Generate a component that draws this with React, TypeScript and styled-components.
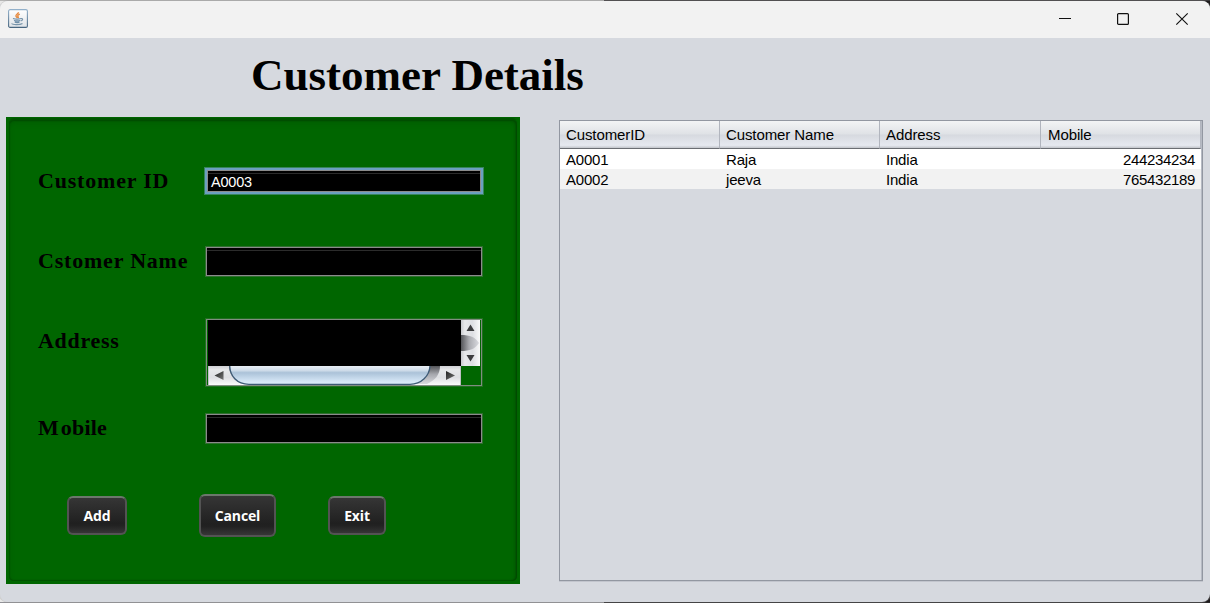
import React from "react";
import styled, { createGlobalStyle } from "styled-components";

const GlobalStyle = createGlobalStyle`
  * { box-sizing: border-box; }
  body { margin: 0; background: #1d1a1c; }
`;

const Backdrop = styled.div`
  width: 1210px;
  height: 603px;
  padding: 1px 0;
  overflow: hidden;
  background:
    linear-gradient(90deg, #b5b5b5 0 604px, #3c3a3c 604px) top / 100% 1px no-repeat,
    linear-gradient(90deg, #929297 0 604px, #2b292b 604px) bottom / 100% 1px no-repeat,
    linear-gradient(90deg, #e8e8e8 0 604px, #1d1a1c 604px);
`;

const Frame = styled.div`
  display: flex;
  flex-direction: column;
  height: 601px;
  border-radius: 8px;
  overflow: hidden;
  background: #d6d9df;
  box-shadow: 0 0 0 1px #8f8f8f44;
`;

const TitleBar = styled.header`
  display: flex;
  align-items: flex-start;
  height: 37px;
  flex: none;
  padding: 8px 20px 0 8px;
  background: #f2f2f2;
  svg { display: block; }
`;

const WindowControls = styled.div`
  display: flex;
  gap: 44px;
  margin: 3px 0 0 auto;
`;

const Heading = styled.h1`
  margin: 0;
  height: 79px;
  flex: none;
  padding-left: 251px;
  font: bold 45px/74px "Liberation Serif", serif;
  color: #000;
`;

const Content = styled.main`
  display: flex;
  gap: 39px;
  padding-left: 6px;
`;

const FormPanel = styled.form`
  width: 514px;
  height: 467px;
  padding: 3px;
  background: #006600;
`;

const PanelInset = styled.div`
  height: 461px;
  padding: 47px 0 0 29px;
  border-radius: 5px;
  box-shadow:
    inset 0 1px 1px #004d00,
    inset 1px 0 1px #005600,
    inset -1px 0 1px #004b00,
    inset -2px 0 2px #005500,
    inset 0 -1px 1px #005800,
    inset 0 3px 5px #00550088,
    0 -2px 1px #005400;
`;

const FieldRow = styled.div<{ $gap: number }>`
  display: flex;
  align-items: flex-start;
  height: ${(p) => p.$gap}px;
`;

const Label = styled.label<{ $top: number; $spacing: number }>`
  width: 168px;
  padding-top: ${(p) => p.$top}px;
  font: bold 22px/26px "Liberation Serif", serif;
  letter-spacing: ${(p) => p.$spacing}px;
  color: #000;
  white-space: nowrap;
`;

const LeadLetter = styled.span`
  letter-spacing: 2px;
`;

const TextBox = styled.div<{ $focused?: boolean }>`
  width: ${(p) => (p.$focused ? 274 : 276)}px;
  height: ${(p) => (p.$focused ? 22 : 29)}px;
  margin: ${(p) => (p.$focused ? "3px 0 0 1px" : "0")};
  padding: ${(p) => (p.$focused ? "3px 0 0 3px" : "0")};
  border: 1px solid #8b8b8b;
  outline: ${(p) => (p.$focused ? "2px solid #6b9fc0" : "none")};
  background: linear-gradient(#000 2px, #2b2b2b 2px 3px, #000 3px);
  box-shadow: ${(p) => (p.$focused ? "0 0 0 3px #38855c" : "0 0 0 1px #2f6f2f")};
  font: 14.5px/16px "Liberation Sans", sans-serif;
  letter-spacing: -0.2px;
  color: #fff;
`;

const ScrollPane = styled.div`
  display: grid;
  grid-template: 46px 19px / 253px 19px;
  width: 276px;
  height: 67px;
  padding: 0 1px;
  border: 1px solid #808d80;
  box-shadow: 0 0 0 1px #206f20;
  svg { display: block; }
`;

const Viewport = styled.div`
  background: #000;
`;

const ButtonRow = styled.div`
  display: flex;
  align-items: center;
  height: 43px;
  padding-left: 29px;
`;

const PushButton = styled.button<{ $width: number; $height: number; $left?: number }>`
  width: ${(p) => p.$width}px;
  height: ${(p) => p.$height}px;
  margin: 0 0 0 ${(p) => p.$left ?? 0}px;
  padding: 1px 0 0;
  border: 2px solid #535353;
  border-top-color: #6c776c;
  border-radius: 6px;
  background: linear-gradient(#373737, #202020 70%, #222 76%, #3b3b3b);
  background-origin: border-box;
  font: bold 14px/18px "Open Sans", sans-serif;
  letter-spacing: -0.15px;
  color: #fff;
`;

const TablePane = styled.section`
  width: 644px;
  height: 461px;
  margin-top: 3px;
  border: 1px solid #9297a1;
  box-shadow: inset -1px 0 #b6bac3, 0 1px #c2c5cd;
`;

const Table = styled.table`
  width: 641px;
  table-layout: fixed;
  border-collapse: separate;
  border-spacing: 0;
  font: 15px/20px "Liberation Sans", sans-serif;
  color: #000;
`;

const HeadCell = styled.th<{ $width: number; $indent: number }>`
  width: ${(p) => p.$width}px;
  height: 28px;
  padding: 0 0 0 ${(p) => p.$indent}px;
  border-right: 1px solid #b1b5be;
  border-bottom: 1px solid #6a6d73;
  background: linear-gradient(#f3f4f5, #dfe2e6 48%, #d6d9df 52%, #e6e9f0 90%, #c1c4ca);
  font-weight: normal;
  letter-spacing: -0.1px;
  text-align: left;
`;

const BodyRow = styled.tr`
  background: #fff;
  &:nth-child(even) { background: #f2f2f2; }
`;

const Cell = styled.td<{ $numeric?: boolean }>`
  height: 20px;
  padding: 2px 6px 0;
  line-height: 18px;
  text-align: ${(p) => (p.$numeric ? "right" : "left")};
  letter-spacing: ${(p) => (p.$numeric ? "-0.34px" : "-0.2px")};
`;

const columns = [
  { title: "CustomerID", width: 160, indent: 6 },
  { title: "Customer Name", width: 160, indent: 6 },
  { title: "Address", width: 161, indent: 6 },
  { title: "Mobile", width: 160, indent: 7 },
];

const customers = [
  ["A0001", "Raja", "India", "244234234"],
  ["A0002", "jeeva", "India", "765432189"],
];

const JavaIcon = () => (
  <svg width="20" height="19" viewBox="0 0 20 19" fill="none">
    <defs>
      <linearGradient id="tile" x1="0" y1="0" x2="0" y2="1">
        <stop offset="0" stopColor="#fff" />
        <stop offset="1" stopColor="#dfe3e7" />
      </linearGradient>
      <linearGradient id="edge" x1="0" y1="0" x2="0" y2="1">
        <stop offset="0" stopColor="#92b0ca" />
        <stop offset="1" stopColor="#486680" />
      </linearGradient>
    </defs>
    <rect x=".6" y=".6" width="18.8" height="17.8" rx="1.5" fill="url(#tile)" stroke="url(#edge)" strokeWidth="1.1" />
    <path d="M10.500 3.200C10.500 5 7.300 5.200 8 7.200C8.300 8 9 8.200 9.200 9M11.800 5.200C9.800 6 9.300 6.800 10.100 7.700C10.500 8.200 10.300 8.800 9.900 9.200" stroke="#e68b42" strokeWidth="1.400" />
    <path d="M5 9.500Q9 10.700 13 9.500M6 11.500Q9 12.500 12.300 11.500M6.800 13.200Q9 14 11.500 13.200" stroke="#6f8fa9" strokeWidth="1.300" />
    <path d="M13 9.600C15.300 9 15 11.500 12.700 12M4 14.300C3.500 16 12 16 14.500 14.500" stroke="#7894aa" strokeWidth="1.200" />
  </svg>
);

const HorizontalScrollbar = () => (
  <svg width="253" height="19" viewBox="0 0 253 19">
    <defs>
      <linearGradient id="barLight" x1="0" y1="0" x2="0" y2="1">
        <stop offset="0" stopColor="#cfd0d5" />
        <stop offset=".2" stopColor="#e7e8ea" />
        <stop offset=".6" stopColor="#dedfe3" />
        <stop offset="1" stopColor="#fafafa" />
      </linearGradient>
      <linearGradient id="barTrack" x1="0" y1="0" x2="0" y2="1">
        <stop offset="0" stopColor="#55565a" />
        <stop offset=".45" stopColor="#a5a6ac" />
        <stop offset="1" stopColor="#dadbe0" />
      </linearGradient>
      <linearGradient id="thumb" x1="0" y1="0" x2="0" y2="1">
        <stop offset="0" stopColor="#eff3f7" />
        <stop offset=".28" stopColor="#cfdce9" />
        <stop offset=".4" stopColor="#abc2d8" />
        <stop offset=".85" stopColor="#d5e6f6" />
        <stop offset="1" stopColor="#dceefb" />
      </linearGradient>
      <linearGradient id="arrow" x1="0" y1="0" x2="1" y2="1">
        <stop offset="0" stopColor="#222" />
        <stop offset="1" stopColor="#777" />
      </linearGradient>
    </defs>
    <rect width="253" height="19" fill="url(#barLight)" />
    <path d="M21 0H232C232 9 227 14 219 18H38C28 18 21 10 21 0Z" fill="url(#barTrack)" />
    <path d="M21.700-1C21.700 10 29 18.300 41 18.300H202C213 18.300 222 10 222-1Z" fill="url(#thumb)" stroke="#3d5a75" strokeWidth="1.300" />
    <path d="M6.500 9.500 15.500 5V14Z" fill="url(#arrow)" />
    <path d="M247 9.500 238 5V14Z" fill="url(#arrow)" />
    <path d="M.5 0V19M252.500 0V19" stroke="#bfc0c4" />
  </svg>
);

const VerticalScrollbar = () => (
  <svg width="19" height="46" viewBox="0 0 19 46">
    <defs>
      <linearGradient id="sideLight">
        <stop offset="0" stopColor="#c9cace" />
        <stop offset=".2" stopColor="#e7e8ea" />
        <stop offset=".6" stopColor="#dedfe3" />
        <stop offset="1" stopColor="#fafafa" />
      </linearGradient>
      <linearGradient id="sideTrack">
        <stop offset="0" stopColor="#55565a" />
        <stop offset=".45" stopColor="#a9aaaf" />
        <stop offset="1" stopColor="#dadbe0" />
      </linearGradient>
    </defs>
    <rect width="19" height="46" fill="url(#sideLight)" />
    <path d="M0 15C9 15 14 17 18 23C14 29 9 31 0 31Z" fill="url(#sideTrack)" />
    <path d="M5.500 11 9.500 4.500 13.500 11ZM5.500 35H13.500L9.500 41.500Z" fill="#3c3c3e" />
  </svg>
);

export default function App() {
  return (
    <Backdrop>
      <GlobalStyle />
      <Frame>
        <TitleBar>
          <JavaIcon />
          <WindowControls>
            <svg width="15" height="15" viewBox="0 0 15 15">
              <path d="M2 6.500H14" stroke="#111" />
            </svg>
            <svg width="15" height="15" viewBox="0 0 15 15" fill="none">
              <rect x="1.600" y="1.600" width="10.800" height="10.800" rx="1" stroke="#111" strokeWidth="1.200" />
            </svg>
            <svg width="15" height="15" viewBox="0 0 15 15">
              <path d="M1.300 1.300 12.700 12.700M12.700 1.300 1.300 12.700" stroke="#111" strokeWidth="1.150" />
            </svg>
          </WindowControls>
        </TitleBar>
        <Heading>Customer Details</Heading>
        <Content>
          <FormPanel>
            <PanelInset>
              <FieldRow $gap={80}>
                <Label $top={1} $spacing={0.8}>Customer ID</Label>
                <TextBox $focused>A0003</TextBox>
              </FieldRow>
              <FieldRow $gap={72}>
                <Label $top={1} $spacing={0.8}>Cstomer Name</Label>
                <TextBox />
              </FieldRow>
              <FieldRow $gap={95}>
                <Label $top={9} $spacing={0.7}>Address</Label>
                <ScrollPane>
                  <Viewport />
                  <VerticalScrollbar />
                  <HorizontalScrollbar />
                </ScrollPane>
              </FieldRow>
              <FieldRow $gap={80}>
                <Label $top={1} $spacing={0.2}>
                  <LeadLetter>M</LeadLetter>obile
                </Label>
                <TextBox />
              </FieldRow>
              <ButtonRow>
                <PushButton type="button" $width={60} $height={39}>Add</PushButton>
                <PushButton type="button" $width={77} $height={43} $left={72}>Cancel</PushButton>
                <PushButton type="button" $width={58} $height={39} $left={52}>Exit</PushButton>
              </ButtonRow>
            </PanelInset>
          </FormPanel>
          <TablePane>
            <Table>
              <thead>
                <tr>
                  {columns.map((c) => (
                    <HeadCell key={c.title} $width={c.width} $indent={c.indent}>{c.title}</HeadCell>
                  ))}
                </tr>
              </thead>
              <tbody>
                {customers.map((row) => (
                  <BodyRow key={row[0]}>
                    {row.map((value, i) => (
                      <Cell key={i} $numeric={i === 3}>{value}</Cell>
                    ))}
                  </BodyRow>
                ))}
              </tbody>
            </Table>
          </TablePane>
        </Content>
      </Frame>
    </Backdrop>
  );
}
